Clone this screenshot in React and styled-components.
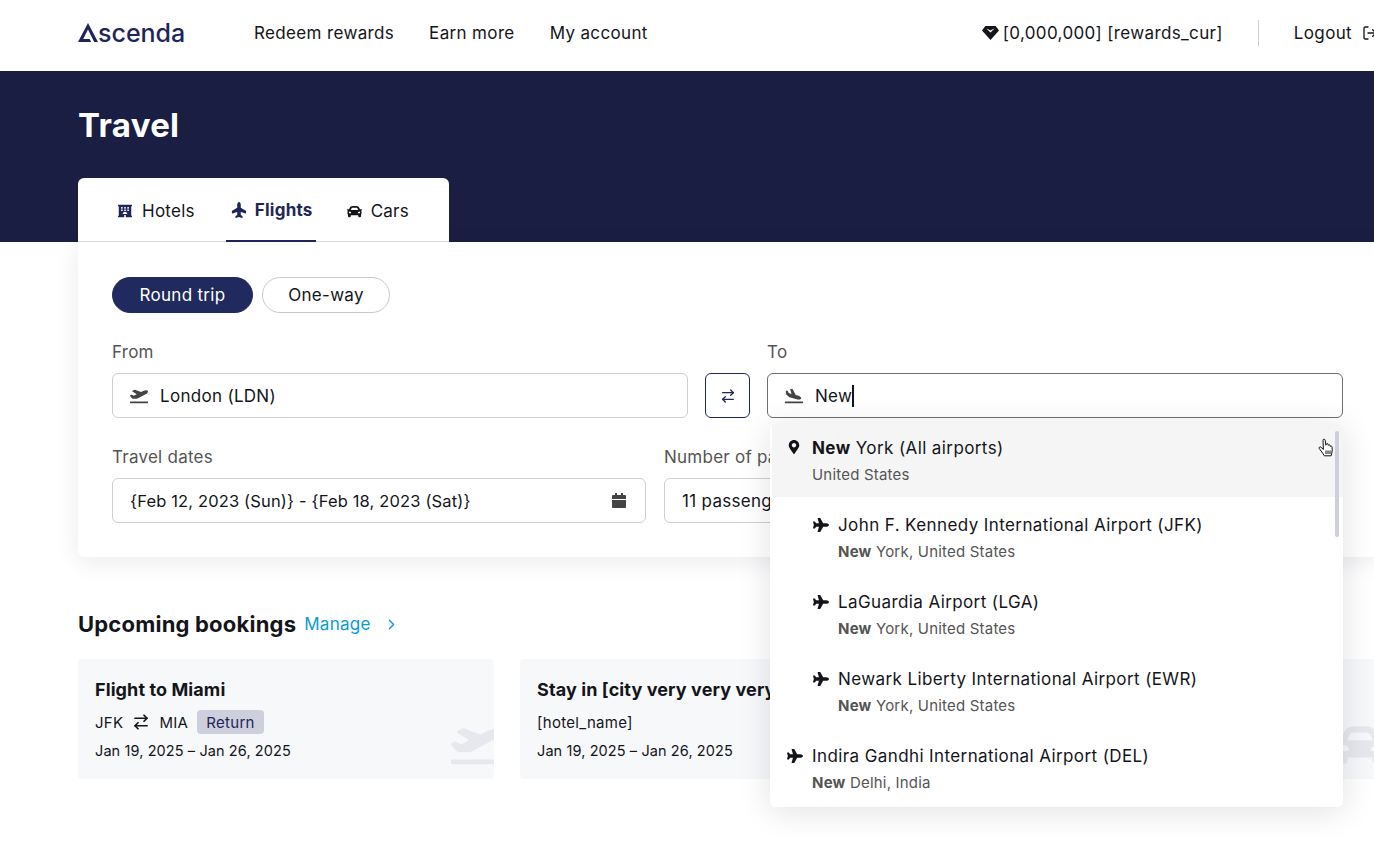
import React from "react";
import styled, { createGlobalStyle } from "styled-components";
import { FaHotel, FaPlane, FaCar, FaMapMarkerAlt, FaPlaneDeparture, FaPlaneArrival } from "react-icons/fa";
import { ArrowRightLeft, ChevronRight, LogOut } from "lucide-react";

const Global = createGlobalStyle`
  html, body { margin: 0; padding: 0; width: 1374px; height: 860px; overflow: hidden; background: #fff; }
  * { box-sizing: border-box; }
  body { font-family: "Inter", "Liberation Sans", sans-serif; color: #14151a; font-size: 16px; }
`;

const Page = styled.div`width: 1456px; height: 860px;`;

const Header = styled.header`
  height: 71px; padding: 0 78px 5px; display: flex; align-items: center; background: #fff;
`;
const Logo = styled.div`
  display: flex; align-items: baseline; width: 176px; color: #1e2559;
  font-size: 25px; font-weight: 500; line-height: 1;
`;
const LogoMark = styled.svg`width: 20px; height: 19px; flex: none;`;
const Nav = styled.nav`display: flex; gap: 35px; font-size: 17px; letter-spacing: 0.35px;`;
const HeaderRight = styled.div`
  margin-left: auto; display: flex; align-items: center; font-size: 17px; letter-spacing: 0.35px;
`;
const Points = styled.div`display: flex; align-items: center; gap: 4px;`;
const GemIcon = styled.svg`width: 17px; height: 14px; flex: none;`;
const Divider = styled.div`width: 1px; height: 26px; background: #cfcfcf; margin: 0 35px 0 35px;`;
const Logout = styled.div`display: flex; align-items: center; gap: 10px;`;

const Banner = styled.section`
  height: 171px; background: #191e42; padding: 0 78px; display: flex; flex-direction: column; justify-content: space-between;
`;
const Title = styled.h1`
  margin: 34px 0 0; color: #fff; font-size: 33px; letter-spacing: 0.3px; line-height: 40px; font-weight: 700;
`;
const Tabs = styled.div`
  width: 371px; height: 64px; background: #fff; border-radius: 6px 6px 0 0; box-shadow: inset 0 -1px 0 #d9d9d9;
  display: flex; padding-left: 40px; gap: 31px;
`;
const Tab = styled.div`
  height: 64px; padding-top: 2px; display: flex; align-items: center; gap: ${p => p.$gap}px;
  padding-left: ${p => p.$active ? 5 : 0}px; padding-right: ${p => p.$active ? 3 : 0}px;
  font-size: 17px; letter-spacing: 0.25px; font-weight: ${p => p.$active ? 700 : 400};
  color: ${p => p.$active ? "#1e2559" : "#14151a"};
  border-bottom: ${p => p.$active ? "2px solid #1e2559" : "none"};
  svg { color: ${p => p.$active || p.$navy ? "#1e2559" : "#14151a"}; }
`;

const Container = styled.div`padding: 0 78px;`;
const SearchCard = styled.div`
  height: 315px; background: #fff; border-radius: 0 0 6px 6px; padding: 35px 35px 34px 34px;
  box-shadow: 0 4px 24px rgba(20, 22, 50, 0.09);
`;
const Pills = styled.div`display: flex; gap: 9px;`;
const Pill = styled.div`
  height: 36px; display: flex; align-items: center; justify-content: center; width: ${p => p.$w}px; border-radius: 18px;
  font-size: 17px; letter-spacing: 0.3px;
  background: ${p => p.$active ? "#212a5e" : "#fff"}; color: ${p => p.$active ? "#fff" : "#14151a"};
  border: 1px solid ${p => p.$active ? "#212a5e" : "#c9c9c9"};
`;
const RowOne = styled.div`
  display: grid; grid-template-columns: 576px 45px 576px; column-gap: 17px; margin-top: 27px; align-items: end;
`;
const RowTwo = styled.div`
  display: grid; grid-template-columns: 534px 534px; column-gap: 18px; margin-top: 27px;
`;
const Field = styled.div`position: relative;`;
const Label = styled.div`
  font-size: 17px; letter-spacing: 0.25px; line-height: 24px; color: #555; margin-bottom: 9px;
`;
const Input = styled.div`
  height: 45px; border-radius: 6px; border: 1px solid ${p => p.$focus ? "#6f6f6f" : "#cfcfcf"}; background: #fff;
  display: flex; align-items: center; padding: 0 17px; gap: 12px;
  font-size: ${p => p.$tight ? 16.5 : 17}px; letter-spacing: ${p => p.$tight ? 0.15 : 0.3}px; color: #14151a;
  white-space: nowrap; overflow: hidden;
  svg { color: #444; flex: none; }
`;
const Typed = styled.span`display: inline-flex; align-items: center;`;
const Caret = styled.span`width: 2px; height: 22px; background: #14151a;`;
const Grow = styled.span`flex: 1;`;
const CalendarIcon = styled.svg`width: 14px; height: 15px; margin-right: 2px;`;
const SwapButton = styled.div`
  width: 45px; height: 45px; border-radius: 6px; border: 1px solid #1e2559; color: #1e2559; display: flex; align-items: center; justify-content: center;
`;

const Dropdown = styled.div`
  position: absolute; top: 84px; left: 3px; right: 0; height: 383px; z-index: 5; overflow: hidden; background: #fff;
  border-radius: 6px; box-shadow: 0 4px 32px rgba(20, 22, 50, 0.13);
`;
const Option = styled.div`
  display: flex; align-items: flex-start; gap: ${p => p.$gap}px; margin-left: ${p => p.$hl ? 2 : 0}px;
  padding: ${p => p.$hl ? 12 : 16}px 0 12px ${p => p.$left}px;
  background: ${p => p.$hl ? "#f5f5f5" : "transparent"};
  svg { flex: none; margin-top: 4px; color: #14151a; }
`;
const OptionTitle = styled.div`font-size: 17px; letter-spacing: 0.4px; line-height: 24px; white-space: nowrap; b { font-weight: 700; }`;
const OptionSub = styled.div`font-size: 15px; letter-spacing: 0.2px; line-height: 20px; margin-top: 5px; color: #555; b { font-weight: 700; }`;
const Thumb = styled.div`
  position: absolute; left: 565px; top: 7px; width: 4px; height: 106px; border-radius: 2px; background: #cdcfdc;
`;
const Cursor = styled.svg`position: absolute; left: 548px; top: 14px; width: 17px; height: 21px;`;

const SectionHead = styled.div`display: flex; align-items: center; margin-top: 50px; height: 34px;`;
const SectionTitle = styled.h2`margin: 0; font-size: 22px; letter-spacing: 0.2px; line-height: 34px; font-weight: 700;`;
const Manage = styled.div`
  display: flex; align-items: center; gap: 12px; margin-left: 8px; color: #0a9bd6; font-size: 17px; letter-spacing: 0.3px;
`;
const Cards = styled.div`display: grid; grid-template-columns: repeat(3, 416px); gap: 26px; margin-top: 18px;`;
const Card = styled.div`
  position: relative; height: 120px; overflow: hidden; background: #f7f8fa; border-radius: 4px; padding: 19px 17px;
`;
const CardTitle = styled.div`font-size: 18px; font-weight: 700; line-height: 24px; letter-spacing: 0.1px; white-space: nowrap;`;
const CardLine = styled.div`
  display: flex; align-items: center; gap: 9px; height: 24px; margin-top: 8px; font-size: 15px; letter-spacing: 0.3px;
`;
const CardDate = styled.div`font-size: 14.5px; letter-spacing: 0.1px; line-height: 20px; margin-top: 7px;`;
const Tag = styled.span`
  background: #cdcfdc; color: #1e2559; border-radius: 4px; height: 24px; padding: 0 9px; display: flex; align-items: center;
`;
const Watermark = styled.div`
  position: absolute; right: ${p => p.$right}px; top: ${p => p.$top}px; color: #e6e8ed; line-height: 0;
`;

const cities = [
  { name: "John F. Kennedy International Airport (JFK)", sub: "York, United States" },
  { name: "LaGuardia Airport (LGA)", sub: "York, United States" },
  { name: "Newark Liberty International Airport (EWR)", sub: "York, United States" },
];

export default function App() {
  return (
    <Page>
      <Global />
      <Header>
        <Logo>
          <LogoMark viewBox="0 0 20 19">
            <path d="M10 0 L20 19 H16.2 L10 6.6 L5.2 16 H11.6 L13.2 19 H0 Z" fill="#1e2559" />
          </LogoMark>
          scenda
        </Logo>
        <Nav>
          <span>Redeem rewards</span>
          <span>Earn more</span>
          <span>My account</span>
        </Nav>
        <HeaderRight>
          <Points>
            <GemIcon viewBox="0 0 17 14">
              <path d="M3.4 0H13.6L17 4.6 8.5 14 0 4.6Z" fill="#14151a" />
              <path d="M4.4 2.6 L8.5 6.4 L12.6 2.6 L10.8 3.2 L8.5 4.6 L6.2 3.2Z" fill="#fff" />
            </GemIcon>
            [0,000,000] [rewards_cur]
          </Points>
          <Divider />
          <Logout>Logout <LogOut size={16} style={{ transform: "scaleX(-1) rotate(180deg)" }} /></Logout>
        </HeaderRight>
      </Header>
      <Banner>
        <Title>Travel</Title>
        <Tabs>
          <Tab $navy $gap={10}><FaHotel size={14} />Hotels</Tab>
          <Tab $active $gap={8}>
            <FaPlane size={16} style={{ transform: "rotate(-90deg)" }} />Flights
          </Tab>
          <Tab $gap={9}><FaCar size={15} />Cars</Tab>
        </Tabs>
      </Banner>
      <Container>
        <SearchCard>
          <Pills>
            <Pill $active $w={141}>Round trip</Pill>
            <Pill $w={128}>One-way</Pill>
          </Pills>
          <RowOne>
            <Field>
              <Label>From</Label>
              <Input><FaPlaneDeparture size={18} />London (LDN)</Input>
            </Field>
            <SwapButton><ArrowRightLeft size={16} /></SwapButton>
            <Field>
              <Label>To</Label>
              <Input $focus><FaPlaneArrival size={18} /><Typed>New<Caret /></Typed></Input>
              <Dropdown>
                <Option $hl $left={15} $gap={11}>
                  <FaMapMarkerAlt size={14} />
                  <div>
                    <OptionTitle><b>New</b> York (All airports)</OptionTitle>
                    <OptionSub>United States</OptionSub>
                  </div>
                </Option>
                {cities.map(c => (
                  <Option key={c.name} $left={43} $gap={9}>
                    <FaPlane size={16} />
                    <div>
                      <OptionTitle>{c.name}</OptionTitle>
                      <OptionSub><b>New</b> {c.sub}</OptionSub>
                    </div>
                  </Option>
                ))}
                <Option $left={17} $gap={9}>
                  <FaPlane size={16} />
                  <div>
                    <OptionTitle>Indira Gandhi International Airport (DEL)</OptionTitle>
                    <OptionSub><b>New</b> Delhi, India</OptionSub>
                  </div>
                </Option>
                <Thumb />
                <Cursor viewBox="0 0 17 21">
                  <path d="M5 2.2c0-1.4 2-1.4 2.2 0l.7 5 .3-1c.5-1 1.8-.7 1.9.3l.1.8c.5-.9 1.8-.6 1.9.4l.1.7c.6-.7 1.8-.3 1.9.7.2 2 .2 4-.3 6l-.7 2.7H6.3L4.6 15 1.3 10.6c-.8-1.1.6-2.3 1.6-1.4L5.4 11.4 5 2.2Z" fill="#fff" stroke="#111" strokeWidth="1" strokeLinejoin="round" />
                  <path d="M8 12.5v3.5M10 12.5v3.5M12 12.5v3.5" stroke="#111" strokeWidth="1" />
                </Cursor>
              </Dropdown>
            </Field>
          </RowOne>
          <RowTwo>
            <Field>
              <Label>Travel dates</Label>
              <Input $tight>
                {"{Feb 12, 2023 (Sun)} - {Feb 18, 2023 (Sat)}"}
                <Grow />
                <CalendarIcon viewBox="0 0 14 15">
                  <path d="M3 0h2v2h4V0h2v2h2a1 1 0 0 1 1 1v3H0V3a1 1 0 0 1 1-1h2V0ZM0 7h14v7a1 1 0 0 1-1 1H1a1 1 0 0 1-1-1V7Z" fill="#444" />
                </CalendarIcon>
              </Input>
            </Field>
            <Field>
              <Label>Number of passengers</Label>
              <Input>11 passengers</Input>
            </Field>
          </RowTwo>
        </SearchCard>
        <SectionHead>
          <SectionTitle>Upcoming bookings</SectionTitle>
          <Manage>Manage <ChevronRight size={17} /></Manage>
        </SectionHead>
        <Cards>
          <Card>
            <CardTitle>Flight to Miami</CardTitle>
            <CardLine>JFK <ArrowRightLeft size={18} strokeWidth={2.3} /> MIA <Tag>Return</Tag></CardLine>
            <CardDate>Jan 19, 2025 – Jan 26, 2025</CardDate>
            <Watermark $right={-5} $top={62}><FaPlaneDeparture size={48} /></Watermark>
          </Card>
          <Card>
            <CardTitle>Stay in [city very very very long name]</CardTitle>
            <CardLine>[hotel_name]</CardLine>
            <CardDate>Jan 19, 2025 – Jan 26, 2025</CardDate>
          </Card>
          <Card>
            <Watermark $right={-7} $top={61}><FaCar size={50} /></Watermark>
          </Card>
        </Cards>
      </Container>
    </Page>
  );
}
